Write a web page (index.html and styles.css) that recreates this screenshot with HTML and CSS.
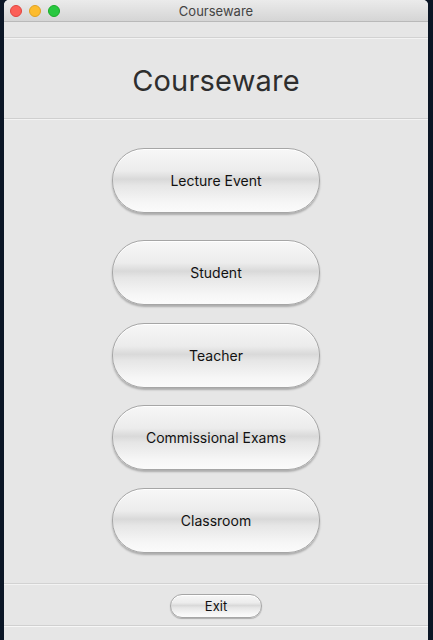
FILE: index.html
```html
<!DOCTYPE html>
<html>
<head>
<meta charset="utf-8">
<link rel="stylesheet" href="styles.css">
</head>
<body>
<div class="window">
  <div class="titlebar">
    <div class="lights">
      <span class="light red"></span>
      <span class="light yellow"></span>
      <span class="light green"></span>
    </div>
    <div class="wtitle">Courseware</div>
  </div>
  <div class="toolbar-gap"></div>
  <header class="heading">Courseware</header>
  <main class="menu">
    <button class="pill first">Lecture Event</button>
    <button class="pill">Student</button>
    <button class="pill">Teacher</button>
    <button class="pill">Commissional Exams</button>
    <button class="pill">Classroom</button>
  </main>
  <footer class="footer">
    <button class="pill small">Exit</button>
  </footer>
  <div class="bottom-strip"></div>
</div>
</body>
</html>
```
FILE: styles.css
```css
html, body {
  margin: 0;
  padding: 0;
}
body {
  width: 433px;
  height: 640px;
  overflow: hidden;
  background: linear-gradient(90deg, #0b1626 0%, #13263c 50%, #0a1524 100%);
  font-family: "Inter", "Liberation Sans", sans-serif;
}
.window {
  margin-left: 4px;
  width: 424px;
  height: 640px;
  background: #e6e6e6;
  display: flex;
  flex-direction: column;
  border-radius: 5px 5px 0 0;
  overflow: hidden;
}
.titlebar {
  height: 22px;
  flex: none;
  position: relative;
  background: linear-gradient(#ebebeb, #d5d5d5);
  border-bottom: 1px solid #b9b9b9;
  box-sizing: border-box;
  display: flex;
  align-items: center;
  justify-content: center;
}
.lights {
  position: absolute;
  left: 6px;
  top: 5px;
  display: flex;
  gap: 7px;
}
.light {
  width: 12px;
  height: 12px;
  border-radius: 50%;
  box-sizing: border-box;
}
.red { background: #fc5f57; border: 1px solid #e0443e; }
.yellow { background: #fdbc2e; border: 1px solid #dea123; }
.green { background: #28c840; border: 1px solid #1aab29; }
.wtitle {
  font-size: 13px;
  color: #444;
  font-family: "Inter", "Liberation Sans", sans-serif;
  padding-top: 1px;
}
.toolbar-gap {
  height: 15px;
  flex: none;
  border-bottom: 1px solid #d2d2d2;
  box-shadow: 0 1px 0 #f3f3f3;
}
.heading {
  height: 81px;
  flex: none;
  display: flex;
  align-items: center;
  justify-content: center;
  padding-top: 5px;
  box-sizing: border-box;
  font-size: 29px;
  color: #2e2e2e;
  border-bottom: 1px solid #cfcfcf;
  box-shadow: 0 1px 0 #f3f3f3;
  letter-spacing: 0.2px;
}
.menu {
  flex: none;
  height: 465px;
  display: flex;
  flex-direction: column;
  align-items: center;
  padding-top: 29px;
  box-sizing: border-box;
  gap: 17.5px;
  border-bottom: 1px solid #d2d2d2;
  box-shadow: 0 1px 0 #f3f3f3;
}
.pill {
  width: 208px;
  height: 65px;
  border-radius: 32px;
  border: 1px solid #a6a6a6;
  background: linear-gradient(180deg, #f7f7f7 0%, #ececec 35%, #d9d9d9 48%, #e6e6e6 58%, #f6f6f6 85%, #fbfbfb 100%);
  box-shadow: 0 2px 2px rgba(0,0,0,0.25), inset 0 1px 0 #ffffff;
  font-family: "Inter", "Liberation Sans", sans-serif;
  font-size: 14px;
  color: #111;
  padding: 0;
  margin: 0;
  flex: none;
}
.menu .pill:nth-child(2) { margin-top: 9.5px; }
.footer {
  flex: none;
  height: 42px;
  display: flex;
  justify-content: center;
  align-items: center;
  padding-top: 2px;
  box-sizing: border-box;
  border-bottom: 1px solid #d0d0d0;
  box-shadow: 0 1px 0 #f7f7f7;
}
.pill.small {
  width: 92px;
  height: 24px;
  border-radius: 12px;
  font-size: 13px;
  box-shadow: 0 1px 1px rgba(0,0,0,0.25), inset 0 1px 0 #fff;
}
.bottom-strip {
  flex: 1;
}
```
